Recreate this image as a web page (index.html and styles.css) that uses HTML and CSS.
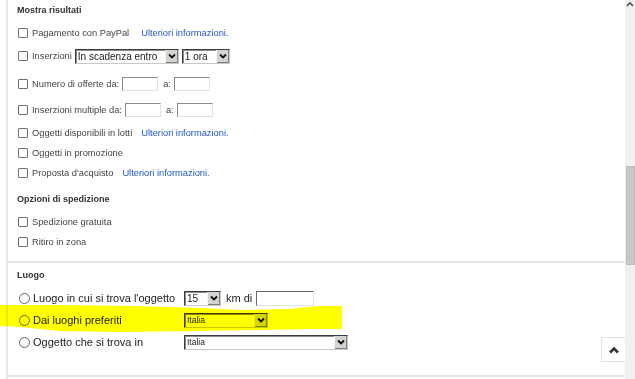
FILE: index.html
```html
<!DOCTYPE html>
<html lang="it">
<head>
    <meta charset="UTF-8">
    <meta name="viewport" content="width=device-width, initial-scale=1.0">
    <title>Filtri di ricerca</title>
    <link rel="stylesheet" href="styles.css">
</head>
<body>
    <div class="page">
        <div class="panel">
            <!-- opzioni di visualizzazione -->
            <section class="filters">
                <h3 class="title">Mostra risultati</h3>
                <div class="row mt3">
                    <span class="check"></span>
                    <span>Pagamento con PayPal</span>
                    <a class="more more-wide" href="#">Ulteriori informazioni.</a>
                </div>
                <div class="row mt3">
                    <span class="check"></span>
                    <span>Inserzioni</span>
                    <span class="select sel-scadenza"><span class="value">In scadenza entro</span><span class="btn"><svg viewBox="0 0 8 6"><polyline points="1,1.5 4,4.5 7,1.5"/></svg></span></span>
                    <span class="select sel-ora"><span class="value">1 ora</span><span class="btn"><svg viewBox="0 0 8 6"><polyline points="1,1.5 4,4.5 7,1.5"/></svg></span></span>
                </div>
                <div class="row mt8">
                    <span class="check"></span>
                    <span>Numero di offerte da:</span>
                    <span class="field"></span>
                    <span class="sep">a:</span>
                    <span class="field"></span>
                </div>
                <div class="row mt6">
                    <span class="check"></span>
                    <span>Inserzioni multiple da:</span>
                    <span class="field"></span>
                    <span class="sep">a:</span>
                    <span class="field"></span>
                </div>
                <div class="row mt3">
                    <span class="check"></span>
                    <span>Oggetti disponibili in lotti</span>
                    <a class="more" href="#">Ulteriori informazioni.</a>
                </div>
                <div class="row">
                    <span class="check"></span>
                    <span>Oggetti in promozione</span>
                </div>
                <div class="row">
                    <span class="check"></span>
                    <span>Proposta d'acquisto</span>
                    <a class="more" href="#">Ulteriori informazioni.</a>
                </div>

                <h3 class="title mt6">Opzioni di spedizione</h3>
                <div class="row mt3">
                    <span class="check"></span>
                    <span>Spedizione gratuita</span>
                </div>
                <div class="row">
                    <span class="check"></span>
                    <span>Ritiro in zona</span>
                </div>
            </section>

            <!-- luogo -->
            <section class="location">
                <h3 class="title">Luogo</h3>
                <div class="place mt2">
                    <span class="radio"></span>
                    <span class="place-label">Luogo in cui si trova l'oggetto</span>
                    <span class="select sel-km"><span class="value">15</span><span class="btn"><svg viewBox="0 0 8 6"><polyline points="1,1.5 4,4.5 7,1.5"/></svg></span></span>
                    <span class="km">km di</span>
                    <span class="field field-cap"></span>
                </div>
                <div class="place">
                    <span class="radio"></span>
                    <span class="place-label">Dai luoghi preferiti</span>
                    <span class="select small sel-pref"><span class="value">Italia</span><span class="btn"><svg viewBox="0 0 8 6"><polyline points="1,1.5 4,4.5 7,1.5"/></svg></span></span>
                </div>
                <div class="place">
                    <span class="radio"></span>
                    <span class="place-label">Oggetto che si trova in</span>
                    <span class="select small sel-paese"><span class="value">Italia</span><span class="btn"><svg viewBox="0 0 8 6"><polyline points="1,1.5 4,4.5 7,1.5"/></svg></span></span>
                </div>
            </section>
        </div>

        <div class="scrollbar">
            <svg class="scroll-up" viewBox="0 0 8 6"><polyline points="1,5 4,2 7,5"/></svg>
            <div class="thumb"></div>
        </div>

        <!-- evidenziatore giallo sopra la riga -->
        <svg class="highlight" viewBox="0 0 635 379">
            <polygon points="0,305 60,305 130,306 200,308 240,310 290,309 318,306 342,306 342,329 310,329 260,330 200,331 120,332 60,331 20,327 0,326"/>
        </svg>

        <a class="to-top" href="#">
            <svg viewBox="0 0 12 8"><polyline points="2,6.5 6,2.5 10,6.5"/></svg>
        </a>
    </div>
</body>
</html>
```

FILE: styles.css
```css
body {
    margin: 0;
    padding: 0;
    background-color: #fff;
    font-family: "Liberation Sans", Arial, sans-serif;
    color: #333;
}

.page {
    position: relative;
    display: flex;
    width: 635px;
    height: 379px;
    overflow: hidden;
}

.panel {
    flex: 1;
    margin-left: 6px;
    border-left: 2px solid #e8e8e8;
}

.title {
    height: 20px;
    line-height: 20px;
    margin: 0;
    padding-left: 9px;
    font-size: 9px;
    font-weight: bold;
    color: #333;
}

.mt2 { margin-top: 2px; }
.mt3 { margin-top: 3px; }
.mt6 { margin-top: 6px; }
.mt8 { margin-top: 8px; }

.filters {
    padding-bottom: 9px;
    border-bottom: 2px solid #e6e6e6;
}

.row {
    display: flex;
    align-items: center;
    height: 20px;
    padding-left: 10px;
    font-size: 9.3px;
    color: #444;
}

.check {
    width: 8px;
    height: 8px;
    margin-right: 4px;
    border: 1px solid #707070;
    border-radius: 1px;
    background: #fff;
}

.more {
    margin-left: 9px;
    color: #2457c5;
    text-decoration: none;
}

.more-wide {
    margin-left: 12px;
}

.select {
    display: inline-flex;
    height: 13px;
    margin-left: 3px;
    border: 1px solid;
    border-color: #3c3c3c #c8c8c8 #c8c8c8 #3c3c3c;
    box-shadow: inset 1px 1px 0 #8c8c8c;
    background: #fff;
    font-size: 10px;
    color: #222;
}

.select .value {
    flex: 1;
    padding-left: 2px;
    line-height: 13px;
}

.select .btn {
    display: flex;
    align-items: center;
    justify-content: center;
    width: 12px;
    background: #d6d3ce;
    border-left: 1px solid #f4f4f4;
    box-shadow: inset -1px -1px 0 #808080;
}

.select .btn svg {
    width: 8px;
    height: 6px;
    fill: none;
    stroke: #111;
    stroke-width: 1.8;
}

.select.small {
    font-size: 8.5px;
}

.sel-scadenza { width: 102px; }
.sel-ora { width: 46px; }
.sel-km { width: 35px; margin-left: 0; }
.sel-pref { width: 82px; margin-left: 0; }
.sel-paese { width: 162px; margin-left: 0; }

.field {
    width: 34px;
    height: 12px;
    margin-left: 3px;
    border: 1px solid;
    border-color: #8a8a8a #e2e2e2 #e2e2e2 #8a8a8a;
    background: #fff;
}

.sep {
    margin-left: 5px;
}

.location {
    padding-top: 2px;
    padding-bottom: 22px;
    border-bottom: 2px solid #e6e6e6;
}

.place {
    display: flex;
    align-items: center;
    height: 22px;
    padding-left: 11px;
    font-size: 11px;
    color: #222;
}

.radio {
    width: 9px;
    height: 9px;
    margin-right: 3px;
    border: 1px solid #666;
    border-radius: 50%;
    background: #fff;
}

.place-label {
    width: 151px;
}

.km {
    margin-left: 5px;
}

.field-cap {
    width: 56px;
    height: 13px;
    margin-left: 4px;
    border-color: #6a6a6a #e2e2e2 #e2e2e2 #6a6a6a;
}

.scrollbar {
    width: 10px;
    background: #f0f0f0;
}

.scroll-up {
    display: block;
    width: 8px;
    height: 6px;
    margin: 1px auto 0;
    fill: none;
    stroke: #505050;
    stroke-width: 1.6;
}

.thumb {
    height: 97px;
    margin: 159px 0 0 1px;
    background: #c8c8c8;
    border: 1px solid #bdbdbd;
}

.highlight {
    position: absolute;
    top: 0;
    left: 0;
    width: 635px;
    height: 379px;
    mix-blend-mode: multiply;
    pointer-events: none;
    fill: #ffff00;
}

.to-top {
    position: absolute;
    top: 337px;
    right: 10px;
    display: flex;
    align-items: center;
    justify-content: center;
    width: 23px;
    height: 23px;
    background: #fff;
    border: 1px solid #e2e2e2;
    border-right: none;
    border-radius: 2px 0 0 2px;
}

.to-top svg {
    width: 12px;
    height: 8px;
    fill: none;
    stroke: #333;
    stroke-width: 2.6;
}
```
